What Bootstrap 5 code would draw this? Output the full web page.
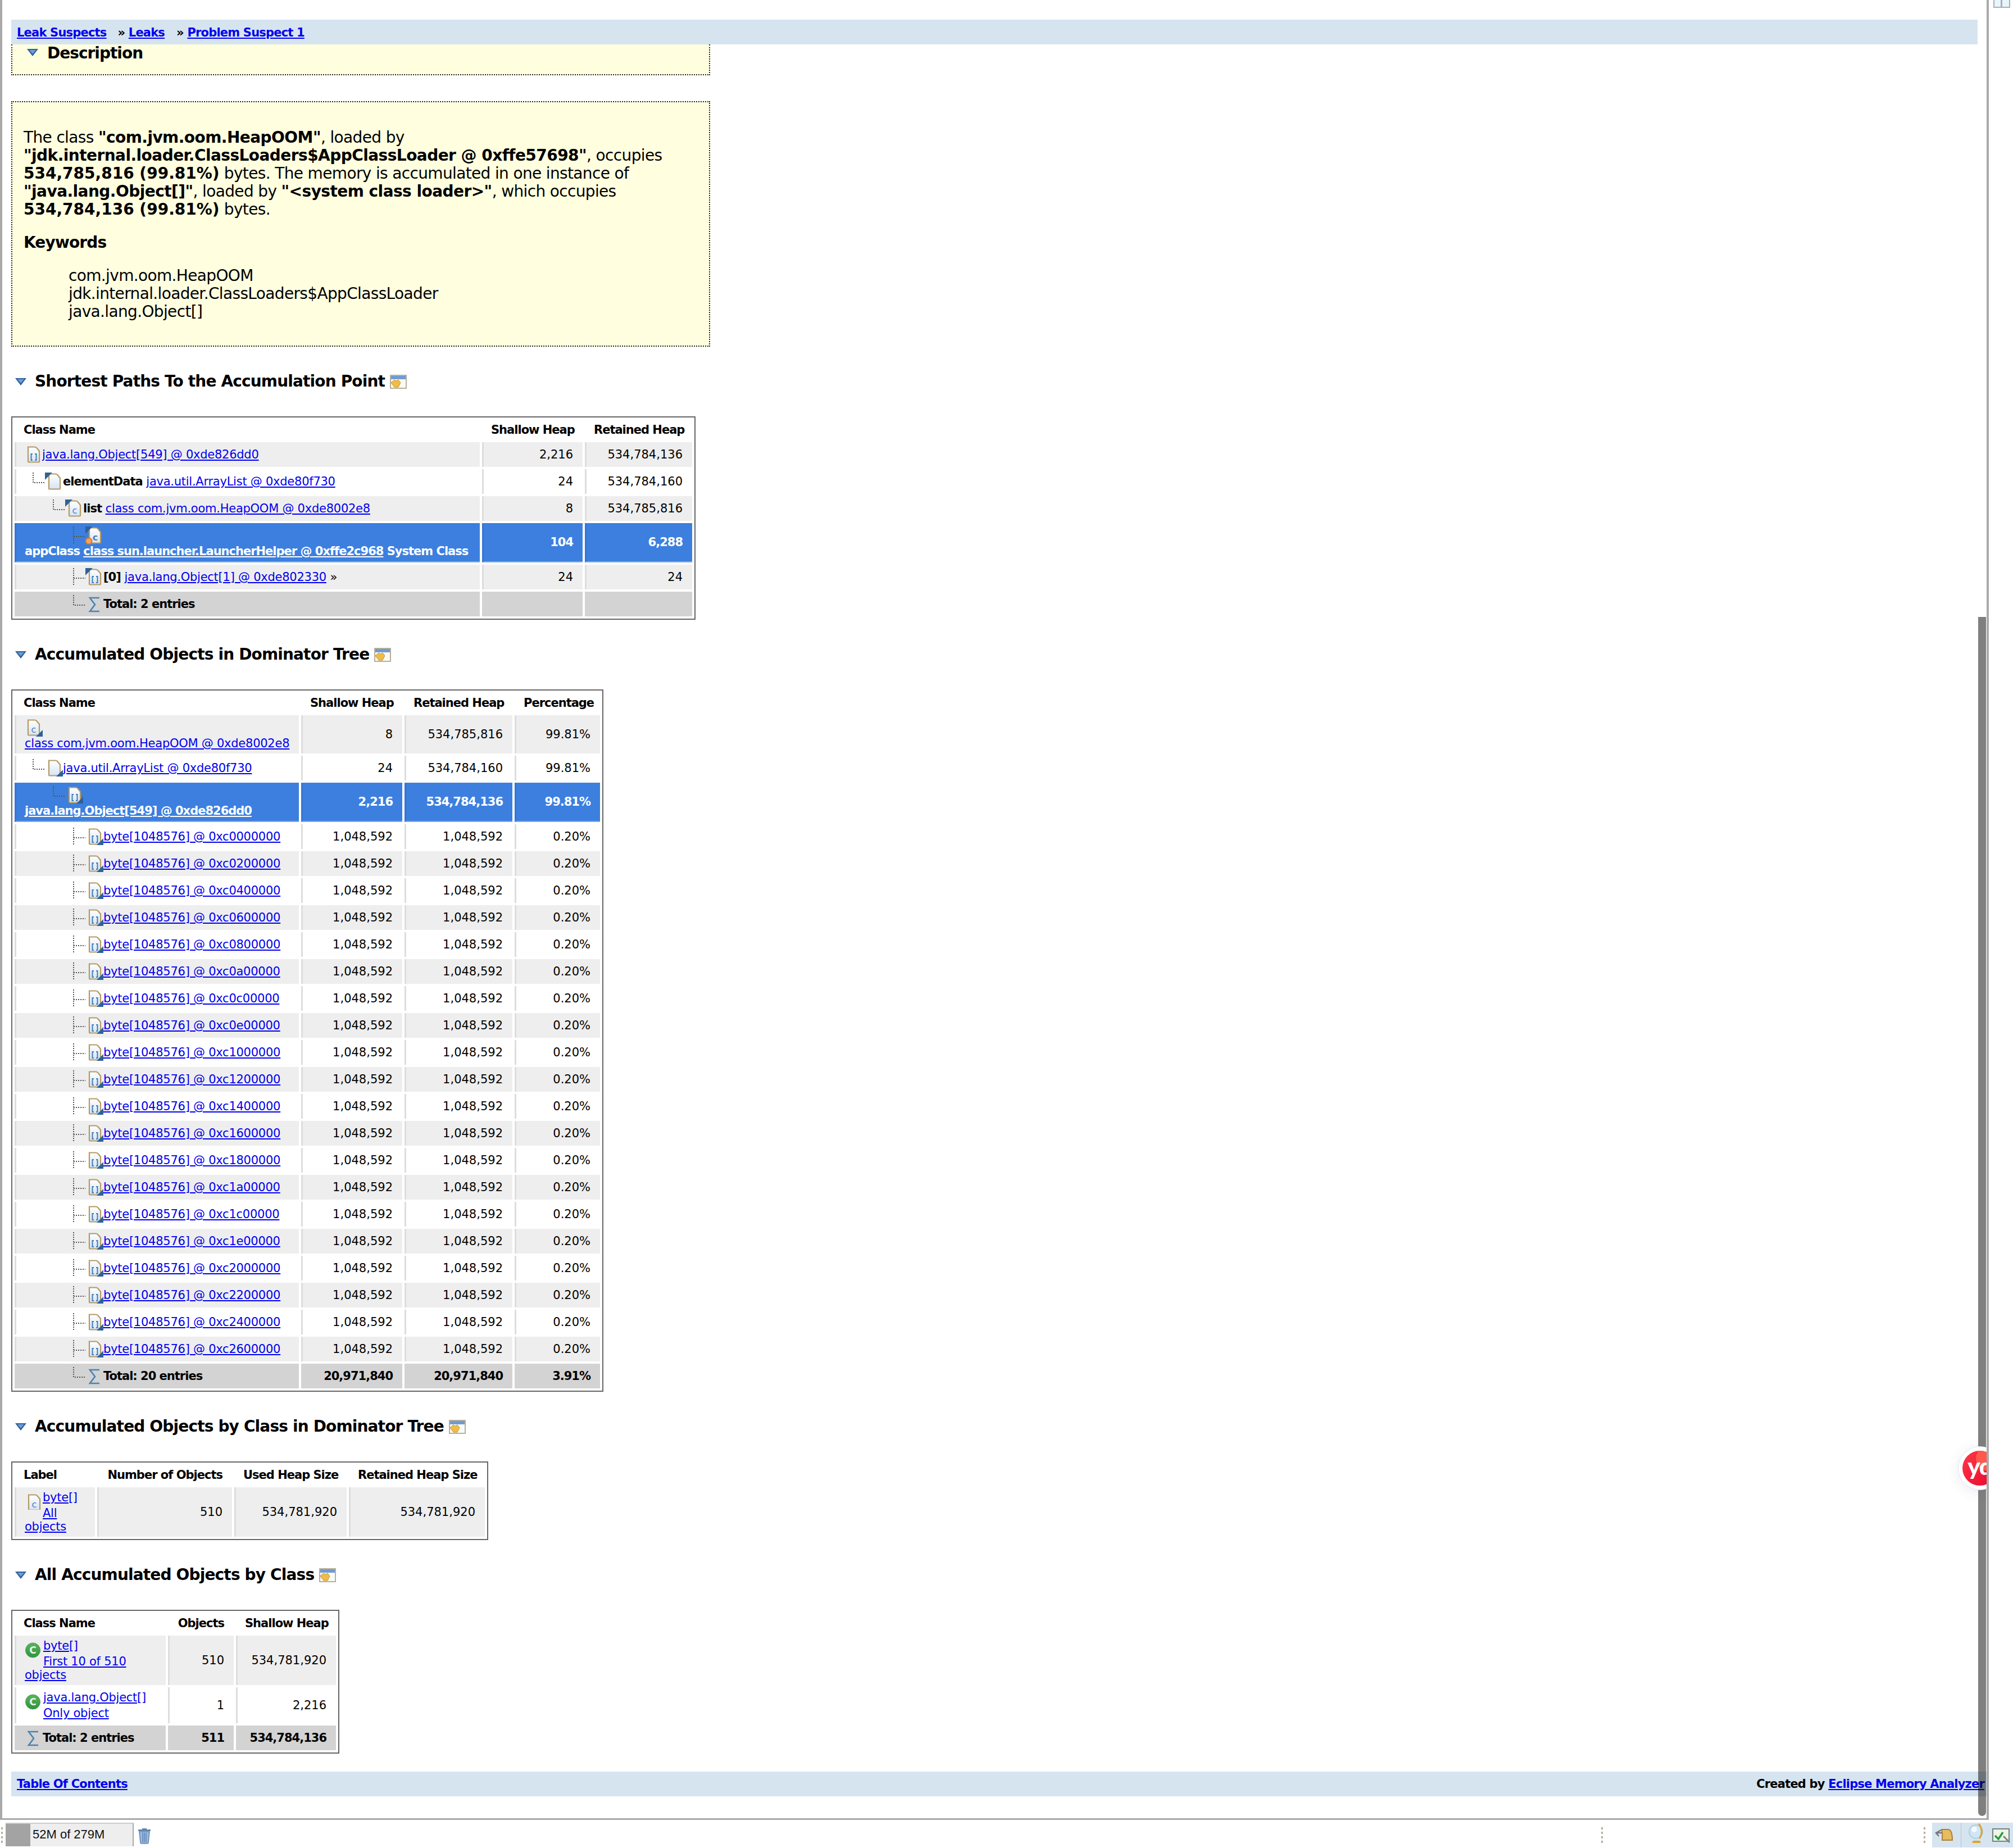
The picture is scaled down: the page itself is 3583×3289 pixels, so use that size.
<!DOCTYPE html>
<html lang="en">
<head>
<meta charset="utf-8">
<title>Problem Suspect 1</title>
<link rel="stylesheet" href="https://cdn.jsdelivr.net/npm/bootstrap@5.3.0/dist/css/bootstrap.min.css">
<style>
html,body{margin:0;height:100%;background:#fff}
body{font-family:"DejaVu Sans",Verdana,sans-serif;color:#000;font-size:21px;line-height:24px}
a{color:#00e;text-decoration:underline}
.app{width:3583px;height:3289px;overflow:hidden}
.topzone{flex:0 0 3239px;height:3239px}
.pane{flex:0 0 3540px;width:3540px;height:3239px;border-left:4px solid #aaa;border-right:4px solid #aaa;border-bottom:3px solid #aaa;padding:35px 0 0 16px;position:relative;overflow:hidden}
.trim{flex:1 1 auto}
.crumbs{width:3500px;height:44px;background:#d6e4f0;font-weight:700;padding:11px 0 0 10px;line-height:24px;letter-spacing:-.8px}
.sep1{margin:0 0 0 20px}.sep2{margin:0 0 0 21px}
.stub{width:1244px;height:55px;background:#ffffe0;border:2px dotted #222;border-top:0;font-size:28px;font-weight:700;line-height:32px;padding-left:26px;margin-bottom:46px;gap:16px;letter-spacing:-1px}
.descbox{width:1244px;height:437px;background:#ffffe0;border:2px dotted #222;font-size:28px;line-height:32px;padding:47px 20px 0;letter-spacing:-.65px}
.descbox p{margin:0 0 27px}
.descbox b{letter-spacing:-.55px}
.descbox b.fig{letter-spacing:0}
.descbox dt{margin:0 0 27px;font-weight:700;letter-spacing:-.85px}
.descbox dd{margin:0 0 0 80px}
.secth{height:32px;margin:46px 0;font-size:28px;line-height:32px;font-weight:700;padding-left:7px;letter-spacing:-.85px}
.secth .title{margin-left:15px}
.secth .ex{margin-left:9px}
.mat-tbl{border:2px solid #666;border-collapse:separate;border-spacing:4px;table-layout:fixed}
.mat-tbl th{padding:6px 17px 6px 16px;font-weight:700;line-height:24px;letter-spacing:-1px;white-space:nowrap}
.mat-tbl td{padding:6px 17px 6px 15px;border-left:3px solid #ddd;vertical-align:middle;line-height:24px;white-space:nowrap}
.mat-tbl td.nm{vertical-align:top}
.mat-tbl td a{letter-spacing:-.25px}
.mat-tbl td b{letter-spacing:-1px}
.mat-tbl tr.alt td{background:#eee}
.mat-tbl tr.tot td{background:#d3d3d3;font-weight:700;border-left-color:#d3d3d3;letter-spacing:-1px}
.mat-tbl tr.sel td{background:#3c7fdf;color:#fff;font-weight:700;border-left-color:#3576d4;border-bottom:2px solid #7fa9ea;letter-spacing:-1px}
.mat-tbl tr.sel a{color:#fff;letter-spacing:-1px}
.ti{vertical-align:-9px}
.lv1{margin-left:14px}.lv2{margin-left:50px}.lv3{margin-left:86px}
.flat{margin-bottom:-6px}
.indent{display:inline-block;width:32px}
.indent4{display:inline-block;width:33px}
.t1{width:1218px}.t1 .c1{width:828px}.t1 .c2{width:179px}.t1 .c3{width:191px}
.t2{width:1054px}.t2 .c1{width:506px}.t2 .c2{width:180px}.t2 .c3{width:192px}.t2 .c4{width:152px}
.t3{width:849px}.t3 .c1{width:143px}.t3 .c2{width:240px}.t3 .c3{width:200px}.t3 .c4{width:242px}
.t4{width:584px}.t4 .c1{width:269px}.t4 .c2{width:117px}.t4 .c3{width:178px}
.foot{width:3518px;height:44px;background:#d6e4f0;font-weight:700;margin-top:32px;padding:10px 6px 0 10px;letter-spacing:-.8px}
.sbar{position:absolute;left:3517px;top:1098px;width:14px;height:2134px;background:rgba(0,0,0,.5);border-radius:0 0 7px 7px}
.yd{position:absolute;left:3481px;top:2574px;width:78px;height:78px;background:#fff;border-radius:50%;border:1px solid #e2e6f5;box-shadow:0 4px 22px rgba(60,70,120,.1);z-index:3}
.ydc{width:62px;height:62px;border-radius:50%;background:linear-gradient(135deg,#ff3a46,#e8062f);position:relative;overflow:hidden;color:#fff;font-family:Lato,"Open Sans",sans-serif;font-weight:900;font-size:42px;line-height:54px;letter-spacing:-1px}
.ydg{position:absolute;left:24px;top:-8px;width:44px;height:44px;border-radius:50%;background:#ff5a4c}
.ydt{position:relative}
.winico{margin:0 0 0 8px;display:block}
.status{flex:0 0 50px;height:50px;font-family:"Liberation Sans",Arial,sans-serif;font-size:22px}
.grip{width:3px;height:28px;background:repeating-linear-gradient(to bottom,#b5aca0 0 4px,transparent 4px 8px)}
.grip1{margin:13px 0 0 2px}
.heap{width:228px;height:42px;margin:5px 0 0 5px;background:#eee;border-top:2px solid #ccc;border-right:2px solid #aaa}
.heapbar{width:44px;height:100%;background:#a3a3a3}
.heaptxt{padding-left:4px;color:#111;line-height:38px}
.trash{margin:13px 0 0 7px}
.grip2{margin:13px 0 0 2581px}
.grip3{margin:13px 0 0 571px}
.tray{width:144px;height:44px;margin:5px 0 0 12px;background:#d6e4f0;position:relative}
.tray svg{position:absolute}
.tr1{left:5px;top:7px}.tr2{left:65px;top:1px}.tr3{left:107px;top:10px}
.traysep{position:absolute;left:51px;top:0;width:1px;height:44px;background:#b8c6d2}
</style>
</head>
<body>
<svg width="0" height="0" class="d-block position-absolute">
<defs>
<linearGradient id="dfill" x1="0" y1="0" x2="0" y2="1"><stop offset="0" stop-color="#fff"/><stop offset="1" stop-color="#d5e4f5"/></linearGradient>
<linearGradient id="gfill" x1="0" y1="0" x2="0" y2="1"><stop offset="0" stop-color="#5bb35c"/><stop offset="1" stop-color="#2f9440"/></linearGradient>
<g id="doc"><path d="M1 1.500H13Q15 1.500 17 4L21 9V27.500Q21 28.500 20 28.500H2Q1 28.500 1 27.500Z" fill="url(#dfill)" stroke="#b39a63" stroke-width="2.200"/></g>
<g id="docC"><use href="#doc"/><text x="11" y="24" font-family="DejaVu Sans,sans-serif" font-size="16" fill="#4a80b8" text-anchor="middle">c</text></g>
<g id="docA"><use href="#doc"/><path d="M9 14H6.500V25H9M13 14H15.500V25H13" fill="none" stroke="#3f7cb6" stroke-width="2"/></g>
<g id="lconn"><path d="M1 0V18H22" fill="none" stroke="#555" stroke-width="2" stroke-dasharray="2 2"/></g>
<g id="tconn"><path d="M1 0V31M1 18H22" fill="none" stroke="#555" stroke-width="2" stroke-dasharray="2 2"/></g>
<g id="tritl"><path d="M22 0H35L22 13Z" fill="#2f6198"/></g>
<g id="tribr"><path d="M54 19V31H42Z" fill="#2f6198"/></g>
<g id="sig"><path d="M19 2H2L11 14L2 26H19" fill="none" stroke="#4c83b0" stroke-width="2.600"/></g>
<g id="byteRow"><use href="#tconn"/><use href="#docA" x="28" y="1"/><use href="#tribr"/></g>
<g id="gc"><circle cx="14.500" cy="14" r="13" fill="url(#gfill)" stroke="#4aa04f" stroke-width="1"/><text x="14.500" y="20" font-family="DejaVu Sans,sans-serif" font-weight="700" font-size="17" fill="#e8f6e8" text-anchor="middle">C</text></g>
<g id="tri"><path d="M0 0H20L10 13Z" fill="#2b5f9e"/><path d="M4 2H16L10 9Z" fill="#6e9fd0"/></g>
<g id="ex"><rect x="1" y="1" width="28" height="23" fill="#fbfbf6" stroke="#b5b09a" stroke-width="2"/><rect x="2" y="2" width="26" height="6" fill="#6f9bd4"/><path d="M2 14L8 9L11 11L15 9L19 14L15 22H8Z" fill="#efbd47" stroke="#c8922b" stroke-width="1"/></g>
</defs>
</svg>

<div class="app d-flex flex-column">
 <div class="topzone d-flex">
  <div class="pane">
   <div class="crumbs"><a href="#">Leak Suspects</a><span class="sep1">»</span> <a href="#">Leaks</a><span class="sep2">»</span> <a href="#">Problem Suspect 1</a></div>
   <div class="stub d-flex"><svg width="20" height="13" class="mt-2 flex-shrink-0"><use href="#tri"/></svg><span>Description</span></div>
   <div class="descbox">
    <p>The class <b>"com.jvm.oom.HeapOOM"</b>, loaded by<br><b>"jdk.internal.loader.ClassLoaders$AppClassLoader @ 0xffe57698"</b>, occupies<br><b class="fig">534,785,816 (99.81%)</b> bytes. The memory is accumulated in one instance of<br><b>"java.lang.Object[]"</b>, loaded by <b>"&lt;system class loader&gt;"</b>, which occupies<br><b class="fig">534,784,136 (99.81%)</b> bytes.</p>
    <dl class="m-0">
     <dt>Keywords</dt>
     <dd>com.jvm.oom.HeapOOM</dd>
     <dd>jdk.internal.loader.ClassLoaders$AppClassLoader</dd>
     <dd>java.lang.Object[]</dd>
    </dl>
   </div>

   <div class="secth d-flex align-items-center"><svg width="20" height="13"><use href="#tri"/></svg><span class="title">Shortest Paths To the Accumulation Point</span><svg class="ex" width="30" height="25"><use href="#ex"/></svg></div>
   <table class="mat-tbl t1">
    <colgroup><col class="c1"><col class="c2"><col class="c3"></colgroup>
    <thead><tr><th>Class Name</th><th class="text-end">Shallow Heap</th><th class="text-end">Retained Heap</th></tr></thead>
    <tbody>
     <tr class="alt"><td class="nm"><svg class="ti" width="31" height="32"><use href="#docA" x="5" y="1"/></svg><a href="#">java.lang.Object[549] @ 0xde826dd0</a></td><td class="text-end">2,216</td><td class="text-end">534,784,136</td></tr>
     <tr><td class="nm"><svg class="ti lv1" width="54" height="32"><use href="#lconn"/><use href="#doc" x="28" y="1"/><use href="#tritl"/></svg><b>elementData</b> <a href="#">java.util.ArrayList @ 0xde80f730</a></td><td class="text-end">24</td><td class="text-end">534,784,160</td></tr>
     <tr class="alt"><td class="nm"><svg class="ti lv2" width="54" height="32"><use href="#lconn"/><use href="#docC" x="28" y="1"/><use href="#tritl"/></svg><b>list</b> <a href="#">class com.jvm.oom.HeapOOM @ 0xde8002e8</a></td><td class="text-end">8</td><td class="text-end">534,785,816</td></tr>
     <tr class="sel"><td class="nm"><svg class="ti lv3" width="54" height="32"><use href="#tconn"/><use href="#docC" x="28" y="1"/><use href="#tritl"/><circle cx="28" cy="26" r="5.500" fill="#f2a65a" stroke="#d9762b" stroke-width="2"/></svg><br>appClass <a href="#">class sun.launcher.LauncherHelper @ 0xffe2c968</a> System Class</td><td class="text-end">104</td><td class="text-end">6,288</td></tr>
     <tr class="alt"><td class="nm"><svg class="ti lv3" width="54" height="32"><use href="#tconn"/><use href="#docA" x="28" y="1"/><use href="#tritl"/></svg><b>[0]</b> <a href="#">java.lang.Object[1] @ 0xde802330</a> »</td><td class="text-end">24</td><td class="text-end">24</td></tr>
     <tr class="tot"><td class="nm"><svg class="ti lv3" width="54" height="32"><use href="#lconn"/><use href="#sig" x="28" y="3"/></svg>Total: 2 entries</td><td></td><td></td></tr>
    </tbody>
   </table>

   <div class="secth d-flex align-items-center"><svg width="20" height="13"><use href="#tri"/></svg><span class="title">Accumulated Objects in Dominator Tree</span><svg class="ex" width="30" height="25"><use href="#ex"/></svg></div>
   <table class="mat-tbl t2">
    <colgroup><col class="c1"><col class="c2"><col class="c3"><col class="c4"></colgroup>
    <thead><tr><th>Class Name</th><th class="text-end">Shallow Heap</th><th class="text-end">Retained Heap</th><th class="text-end">Percentage</th></tr></thead>
    <tbody>
     <tr class="alt"><td class="nm"><svg class="ti" width="36" height="32"><use href="#docC" x="5" y="1"/><path d="M32 20V32H20Z" fill="#2f6198"/></svg><br><a href="#">class com.jvm.oom.HeapOOM @ 0xde8002e8</a></td><td class="text-end">8</td><td class="text-end">534,785,816</td><td class="text-end">99.81%</td></tr>
     <tr><td class="nm"><svg class="ti lv1" width="54" height="32"><use href="#lconn"/><use href="#doc" x="28" y="1"/><use href="#tribr"/></svg><a href="#">java.util.ArrayList @ 0xde80f730</a></td><td class="text-end">24</td><td class="text-end">534,784,160</td><td class="text-end">99.81%</td></tr>
     <tr class="sel"><td class="nm"><svg class="ti lv2" width="54" height="32"><use href="#lconn"/><use href="#docA" x="28" y="1"/><use href="#tribr"/></svg><br><a href="#">java.lang.Object[549] @ 0xde826dd0</a></td><td class="text-end">2,216</td><td class="text-end">534,784,136</td><td class="text-end">99.81%</td></tr>
     <tr><td class="nm"><svg class="ti lv3" width="54" height="32"><use href="#byteRow"/></svg><a href="#">byte[1048576] @ 0xc0000000</a></td><td class="text-end">1,048,592</td><td class="text-end">1,048,592</td><td class="text-end">0.20%</td></tr>
     <tr class="alt"><td class="nm"><svg class="ti lv3" width="54" height="32"><use href="#byteRow"/></svg><a href="#">byte[1048576] @ 0xc0200000</a></td><td class="text-end">1,048,592</td><td class="text-end">1,048,592</td><td class="text-end">0.20%</td></tr>
     <tr><td class="nm"><svg class="ti lv3" width="54" height="32"><use href="#byteRow"/></svg><a href="#">byte[1048576] @ 0xc0400000</a></td><td class="text-end">1,048,592</td><td class="text-end">1,048,592</td><td class="text-end">0.20%</td></tr>
     <tr class="alt"><td class="nm"><svg class="ti lv3" width="54" height="32"><use href="#byteRow"/></svg><a href="#">byte[1048576] @ 0xc0600000</a></td><td class="text-end">1,048,592</td><td class="text-end">1,048,592</td><td class="text-end">0.20%</td></tr>
     <tr><td class="nm"><svg class="ti lv3" width="54" height="32"><use href="#byteRow"/></svg><a href="#">byte[1048576] @ 0xc0800000</a></td><td class="text-end">1,048,592</td><td class="text-end">1,048,592</td><td class="text-end">0.20%</td></tr>
     <tr class="alt"><td class="nm"><svg class="ti lv3" width="54" height="32"><use href="#byteRow"/></svg><a href="#">byte[1048576] @ 0xc0a00000</a></td><td class="text-end">1,048,592</td><td class="text-end">1,048,592</td><td class="text-end">0.20%</td></tr>
     <tr><td class="nm"><svg class="ti lv3" width="54" height="32"><use href="#byteRow"/></svg><a href="#">byte[1048576] @ 0xc0c00000</a></td><td class="text-end">1,048,592</td><td class="text-end">1,048,592</td><td class="text-end">0.20%</td></tr>
     <tr class="alt"><td class="nm"><svg class="ti lv3" width="54" height="32"><use href="#byteRow"/></svg><a href="#">byte[1048576] @ 0xc0e00000</a></td><td class="text-end">1,048,592</td><td class="text-end">1,048,592</td><td class="text-end">0.20%</td></tr>
     <tr><td class="nm"><svg class="ti lv3" width="54" height="32"><use href="#byteRow"/></svg><a href="#">byte[1048576] @ 0xc1000000</a></td><td class="text-end">1,048,592</td><td class="text-end">1,048,592</td><td class="text-end">0.20%</td></tr>
     <tr class="alt"><td class="nm"><svg class="ti lv3" width="54" height="32"><use href="#byteRow"/></svg><a href="#">byte[1048576] @ 0xc1200000</a></td><td class="text-end">1,048,592</td><td class="text-end">1,048,592</td><td class="text-end">0.20%</td></tr>
     <tr><td class="nm"><svg class="ti lv3" width="54" height="32"><use href="#byteRow"/></svg><a href="#">byte[1048576] @ 0xc1400000</a></td><td class="text-end">1,048,592</td><td class="text-end">1,048,592</td><td class="text-end">0.20%</td></tr>
     <tr class="alt"><td class="nm"><svg class="ti lv3" width="54" height="32"><use href="#byteRow"/></svg><a href="#">byte[1048576] @ 0xc1600000</a></td><td class="text-end">1,048,592</td><td class="text-end">1,048,592</td><td class="text-end">0.20%</td></tr>
     <tr><td class="nm"><svg class="ti lv3" width="54" height="32"><use href="#byteRow"/></svg><a href="#">byte[1048576] @ 0xc1800000</a></td><td class="text-end">1,048,592</td><td class="text-end">1,048,592</td><td class="text-end">0.20%</td></tr>
     <tr class="alt"><td class="nm"><svg class="ti lv3" width="54" height="32"><use href="#byteRow"/></svg><a href="#">byte[1048576] @ 0xc1a00000</a></td><td class="text-end">1,048,592</td><td class="text-end">1,048,592</td><td class="text-end">0.20%</td></tr>
     <tr><td class="nm"><svg class="ti lv3" width="54" height="32"><use href="#byteRow"/></svg><a href="#">byte[1048576] @ 0xc1c00000</a></td><td class="text-end">1,048,592</td><td class="text-end">1,048,592</td><td class="text-end">0.20%</td></tr>
     <tr class="alt"><td class="nm"><svg class="ti lv3" width="54" height="32"><use href="#byteRow"/></svg><a href="#">byte[1048576] @ 0xc1e00000</a></td><td class="text-end">1,048,592</td><td class="text-end">1,048,592</td><td class="text-end">0.20%</td></tr>
     <tr><td class="nm"><svg class="ti lv3" width="54" height="32"><use href="#byteRow"/></svg><a href="#">byte[1048576] @ 0xc2000000</a></td><td class="text-end">1,048,592</td><td class="text-end">1,048,592</td><td class="text-end">0.20%</td></tr>
     <tr class="alt"><td class="nm"><svg class="ti lv3" width="54" height="32"><use href="#byteRow"/></svg><a href="#">byte[1048576] @ 0xc2200000</a></td><td class="text-end">1,048,592</td><td class="text-end">1,048,592</td><td class="text-end">0.20%</td></tr>
     <tr><td class="nm"><svg class="ti lv3" width="54" height="32"><use href="#byteRow"/></svg><a href="#">byte[1048576] @ 0xc2400000</a></td><td class="text-end">1,048,592</td><td class="text-end">1,048,592</td><td class="text-end">0.20%</td></tr>
     <tr class="alt"><td class="nm"><svg class="ti lv3" width="54" height="32"><use href="#byteRow"/></svg><a href="#">byte[1048576] @ 0xc2600000</a></td><td class="text-end">1,048,592</td><td class="text-end">1,048,592</td><td class="text-end">0.20%</td></tr>
     <tr class="tot"><td class="nm"><svg class="ti lv3" width="54" height="32"><use href="#lconn"/><use href="#sig" x="28" y="3"/></svg>Total: 20 entries</td><td class="text-end">20,971,840</td><td class="text-end">20,971,840</td><td class="text-end">3.91%</td></tr>
    </tbody>
   </table>

   <div class="secth d-flex align-items-center"><svg width="20" height="13"><use href="#tri"/></svg><span class="title">Accumulated Objects by Class in Dominator Tree</span><svg class="ex" width="30" height="25"><use href="#ex"/></svg></div>
   <table class="mat-tbl t3">
    <colgroup><col class="c1"><col class="c2"><col class="c3"><col class="c4"></colgroup>
    <thead><tr><th>Label</th><th class="text-end">Number of Objects</th><th class="text-end">Used Heap Size</th><th class="text-end">Retained Heap Size</th></tr></thead>
    <tbody>
     <tr class="alt"><td class="nm"><svg class="ti flat" width="32" height="28"><use href="#docC" x="6" y="0"/></svg><a href="#">byte[]</a><br><span class="indent"></span><a href="#">All<br>objects</a></td><td class="text-end">510</td><td class="text-end">534,781,920</td><td class="text-end">534,781,920</td></tr>
    </tbody>
   </table>

   <div class="secth d-flex align-items-center"><svg width="20" height="13"><use href="#tri"/></svg><span class="title">All Accumulated Objects by Class</span><svg class="ex" width="30" height="25"><use href="#ex"/></svg></div>
   <table class="mat-tbl t4">
    <colgroup><col class="c1"><col class="c2"><col class="c3"></colgroup>
    <thead><tr><th>Class Name</th><th class="text-end">Objects</th><th class="text-end">Shallow Heap</th></tr></thead>
    <tbody>
     <tr class="alt"><td class="nm"><svg class="ti flat" width="33" height="28"><use href="#gc"/></svg><a href="#">byte[]</a><br><span class="indent4"></span><a href="#">First 10 of 510<br>objects</a></td><td class="text-end">510</td><td class="text-end">534,781,920</td></tr>
     <tr><td class="nm"><svg class="ti flat" width="33" height="28"><use href="#gc"/></svg><a href="#">java.lang.Object[]</a><br><span class="indent4"></span><a href="#">Only object</a></td><td class="text-end">1</td><td class="text-end">2,216</td></tr>
     <tr class="tot"><td class="nm"><svg class="ti" width="32" height="32"><use href="#sig" x="5" y="3"/></svg>Total: 2 entries</td><td class="text-end">511</td><td class="text-end">534,784,136</td></tr>
    </tbody>
   </table>

   <div class="foot d-flex justify-content-between"><a href="#">Table Of Contents</a><span>Created by <a href="#">Eclipse Memory Analyzer</a></span></div>
   <div class="sbar"></div>
   <div class="yd d-flex align-items-center justify-content-center"><div class="ydc text-center"><span class="ydg"></span><span class="ydt">yd</span></div></div>
  </div>
  <div class="trim">
   <svg class="winico" width="30" height="14"><rect x="1" y="-2" width="13" height="15" fill="#e8f6fc" stroke="#a9aec0" stroke-width="2"/><rect x="15" y="-2" width="14" height="15" fill="#e8f6fc" stroke="#a9aec0" stroke-width="2"/></svg>
  </div>
 </div>
 <div class="status d-flex">
  <div class="grip grip1"></div>
  <div class="heap d-flex"><div class="heapbar"></div><div class="heaptxt">52M of 279M</div></div>
  <svg class="trash" width="24" height="30"><path d="M8 2H16V4H23V7H1V4H8Z" fill="#5f86b5"/><path d="M3 8H21L19 28Q18 29 17 29H7Q6 29 5 28Z" fill="#9db9da" stroke="#5f86b5" stroke-width="1.500"/><path d="M9 10V27M12 10V27M15 10V27" stroke="#5f86b5" stroke-width="1.500"/></svg>
  <div class="grip grip2"></div>
  <div class="grip grip3"></div>
  <div class="tray">
   <span class="traysep"></span>
   <svg class="tr1" width="34" height="26"><path d="M12 5H24Q31 6 31 24H13Q14 14 12 5Z" fill="#e8bb5f" stroke="#a8823a" stroke-width="2"/><path d="M11 6L2 11L7 17M3 11H13" fill="none" stroke="#777" stroke-width="2.500"/></svg>
   <svg class="tr2" width="28" height="36"><circle cx="13" cy="15" r="12" fill="#cfe6f5" stroke="#a9c6db" stroke-width="1.500"/><circle cx="10" cy="11" r="5" fill="#f2fafe"/><path d="M18 1Q28 14 19 27" fill="none" stroke="#d9a52e" stroke-width="3"/><path d="M8 31H20L22 35H6Z" fill="#d9a52e"/></svg>
   <svg class="tr3" width="33" height="26"><rect x="1" y="1" width="29" height="22" fill="#eef4ea" stroke="#77807a" stroke-width="2"/><path d="M5 13L11 19L19 7" fill="none" stroke="#23a03a" stroke-width="3.500"/><path d="M20 14L31 25" stroke="#7a8a80" stroke-width="3"/></svg>
  </div>
 </div>
</div>
<script src="https://cdn.jsdelivr.net/npm/bootstrap@5.3.0/dist/js/bootstrap.bundle.min.js"></script>
</body>
</html>
